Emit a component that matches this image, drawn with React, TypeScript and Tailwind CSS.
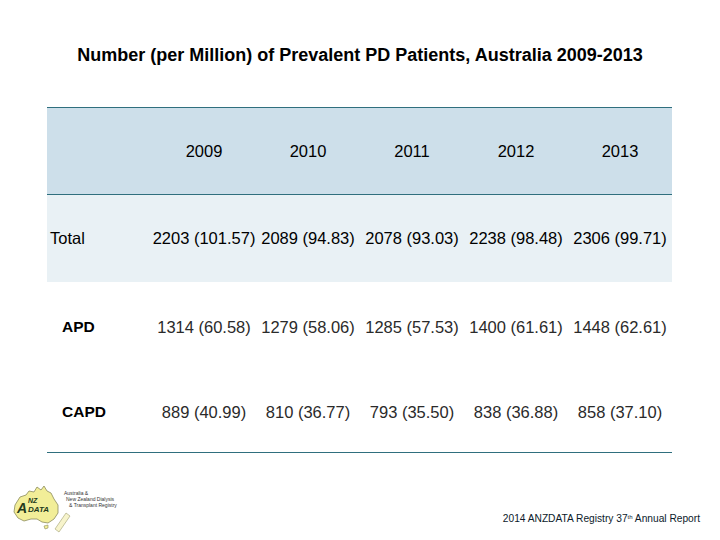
const years = ["2009", "2010", "2011", "2012", "2013"];

const rows = [
  {
    label: "APD",
    values: ["1314 (60.58)", "1279 (58.06)", "1285 (57.53)", "1400 (61.61)", "1448 (62.61)"],
  },
  {
    label: "CAPD",
    values: ["889 (40.99)", "810 (36.77)", "793 (35.50)", "838 (36.88)", "858 (37.10)"],
  },
];

const totals = ["2203 (101.57)", "2089 (94.83)", "2078 (93.03)", "2238 (98.48)", "2306 (99.71)"];

function AnzdataLogo() {
  return (
    <div className="flex items-start">
      <svg width="62" height="52" viewBox="0 0 62 52">
        {/* rough Australia outline */}
        <path
          d="M3 22 L8 14 L14 12 L17 8 L22 9 L25 4 L29 7 L32 3 L35 8 L39 10 L42 16 L46 22 L46 30 L42 36 L36 40 L30 39 L25 36 L19 36 L12 38 L6 35 L2 29 Z"
          fill="#f2ee98"
          stroke="#8c8c5c"
          strokeWidth="0.8"
        />
        <path d="M32 43 L36 42 L36 45 L33 46 Z" fill="#f2ee98" stroke="#8c8c5c" strokeWidth="0.6" />
        {/* NZ strip */}
        <path d="M54 30 L58 33 L47 49 L43 46 Z" fill="#f7f4cc" stroke="#a0a070" strokeWidth="0.6" />
        <text x="5" y="30" fontSize="14" fontWeight="700" fontStyle="italic" fill="#233a1c" fontFamily="Liberation Sans, Arial, sans-serif">A</text>
        <text x="16" y="20" fontSize="7" fontWeight="700" fontStyle="italic" fill="#233a1c" fontFamily="Liberation Sans, Arial, sans-serif">NZ</text>
        <text x="16" y="29" fontSize="8" fontWeight="700" fontStyle="italic" fill="#233a1c" fontFamily="Liberation Sans, Arial, sans-serif">DATA</text>
      </svg>
      <div className="ml-[-10px] mt-[7px] text-[5px] leading-[6px] text-[#333] font-['Liberation_Sans',Arial,sans-serif] whitespace-nowrap">
        <div>Australia &amp;</div>
        <div className="pl-[2px]">New Zealand Dialysis</div>
        <div className="pl-[5px]">&amp; Transplant Registry</div>
      </div>
    </div>
  );
}

export default function App() {
  return (
    <div className="w-[720px] h-[540px] bg-white overflow-hidden font-['Liberation_Sans',Arial,sans-serif] text-black">
      {/* Title */}
      <h1 className="pt-[45px] text-center text-[18px] font-bold leading-[21px]">
        Number (per Million) of Prevalent PD Patients, Australia 2009-2013
      </h1>

      {/* Table */}
      <div className="ml-[47px] mt-[41px] w-[625px] border-t-[1.5px] border-b-[1.5px] border-[#2f6f7e] text-[16.5px]">
        <div className="grid grid-cols-[105px_repeat(5,104px)] h-[87px] items-center bg-[#cddfea] border-b-[1.5px] border-[#2f6f7e]">
          <div />
          {years.map((y) => (
            <div key={y} className="text-center">
              {y}
            </div>
          ))}
        </div>
        <div className="grid grid-cols-[105px_repeat(5,104px)] h-[87px] items-center bg-[#e9f1f5]">
          <div className="pl-[3px]">Total</div>
          {totals.map((v) => (
            <div key={v} className="text-center whitespace-nowrap">
              {v}
            </div>
          ))}
        </div>
        {rows.map((r) => (
          <div key={r.label} className="grid grid-cols-[105px_repeat(5,104px)] h-[85px] pt-[5px] items-center">
            <div className="pl-[15px] font-bold text-[15.5px]">{r.label}</div>
            {r.values.map((v) => (
              <div key={v} className="text-center whitespace-nowrap text-[#2a2a2a]">
                {v}
              </div>
            ))}
          </div>
        ))}
      </div>

      {/* Footer */}
      <div className="flex items-end justify-between pl-[12px] pr-[20px] mt-[30px]">
        <AnzdataLogo />
        <div className="mb-[9px] text-[10.2px] text-[#0b1a2a]">
          2014 ANZDATA Registry 37<sup className="text-[6px]">th</sup> Annual Report
        </div>
      </div>
    </div>
  );
}
